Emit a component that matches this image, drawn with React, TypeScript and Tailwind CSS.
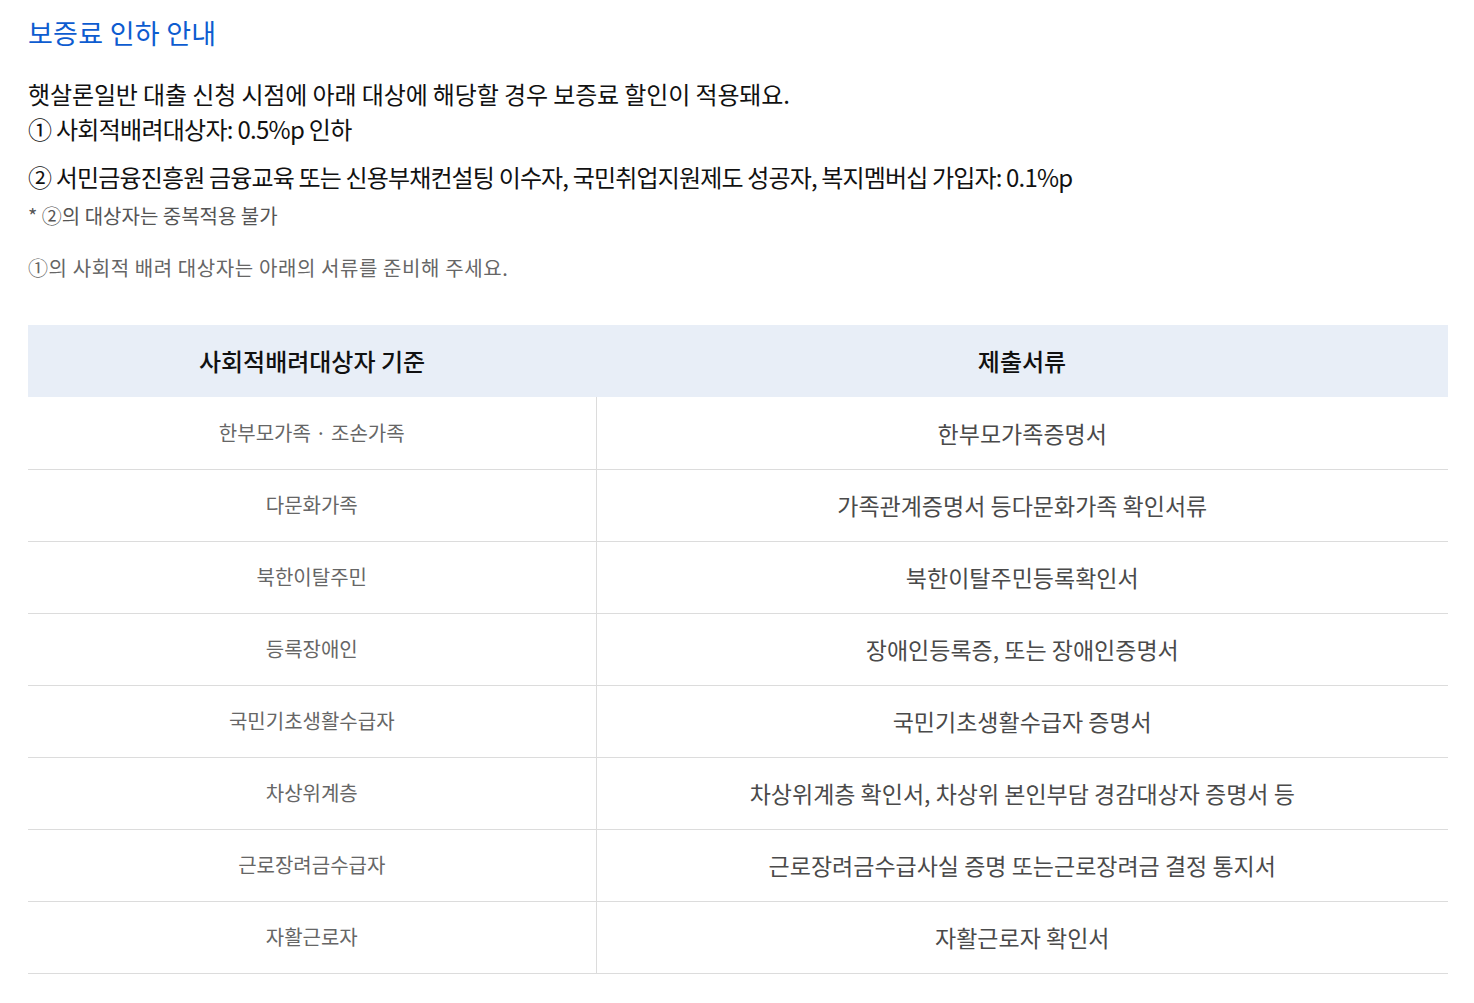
import React from 'react';

const rows: { target: string; docs: string }[] = [
  { target: '한부모가족 · 조손가족', docs: '한부모가족증명서' },
  { target: '다문화가족', docs: '가족관계증명서 등다문화가족 확인서류' },
  { target: '북한이탈주민', docs: '북한이탈주민등록확인서' },
  { target: '등록장애인', docs: '장애인등록증, 또는 장애인증명서' },
  { target: '국민기초생활수급자', docs: '국민기초생활수급자 증명서' },
  { target: '차상위계층', docs: '차상위계층 확인서, 차상위 본인부담 경감대상자 증명서 등' },
  { target: '근로장려금수급자', docs: '근로장려금수급사실 증명 또는근로장려금 결정 통지서' },
  { target: '자활근로자', docs: '자활근로자 확인서' },
];

export default function App() {
  return (
    <div className="min-h-screen bg-white pl-[28px] pr-[26px] pt-[13px] font-['Noto_Sans_CJK_KR','Noto_Sans',sans-serif]">
      <h1 className="text-[27px] leading-[40px] font-normal text-[#0d5cd0] tracking-[0.01em]">
        보증료 인하 안내
      </h1>

      {/* 안내 문구 */}
      <div className="mt-[23px] text-[24px] leading-[35px] text-[#111] tracking-[-0.03em]">
        <p className="tracking-[-0.005em]">햇살론일반 대출 신청 시점에 아래 대상에 해당할 경우 보증료 할인이 적용돼요.</p>
        <p>① 사회적배려대상자: 0.5%p 인하</p>
        <p className="mt-[13px] tracking-[-0.035em]">
          ② 서민금융진흥원 금융교육 또는 신용부채컨설팅 이수자, 국민취업지원제도 성공자, 복지멤버십 가입자: 0.1%p
        </p>
      </div>
      <p className="mt-[9px] text-[20px] leading-[26px] text-[#555]">* ②의 대상자는 중복적용 불가</p>
      <p className="mt-[26px] text-[20px] leading-[26px] text-[#666] tracking-[0.03em]">
        ①의 사회적 배려 대상자는 아래의 서류를 준비해 주세요.
      </p>

      {/* 제출서류 표 */}
      <table className="mt-[44px] w-full border-collapse table-fixed">
        <colgroup>
          <col className="w-[40%]" />
          <col />
        </colgroup>
        <thead>
          <tr className="bg-[#e8eef7] h-[72px]">
            <th className="text-[24px] font-medium text-[#111]">사회적배려대상자 기준</th>
            <th className="text-[24px] font-medium text-[#111]">제출서류</th>
          </tr>
        </thead>
        <tbody>
          {rows.map((row) => (
            <tr key={row.target} className="h-[72px] border-b border-[#dcdcdc]">
              <td className="border-r border-[#dcdcdc] text-center text-[20px] text-[#666]">{row.target}</td>
              <td className="text-center text-[23px] text-[#4a4a4a]">{row.docs}</td>
            </tr>
          ))}
        </tbody>
      </table>
    </div>
  );
}
